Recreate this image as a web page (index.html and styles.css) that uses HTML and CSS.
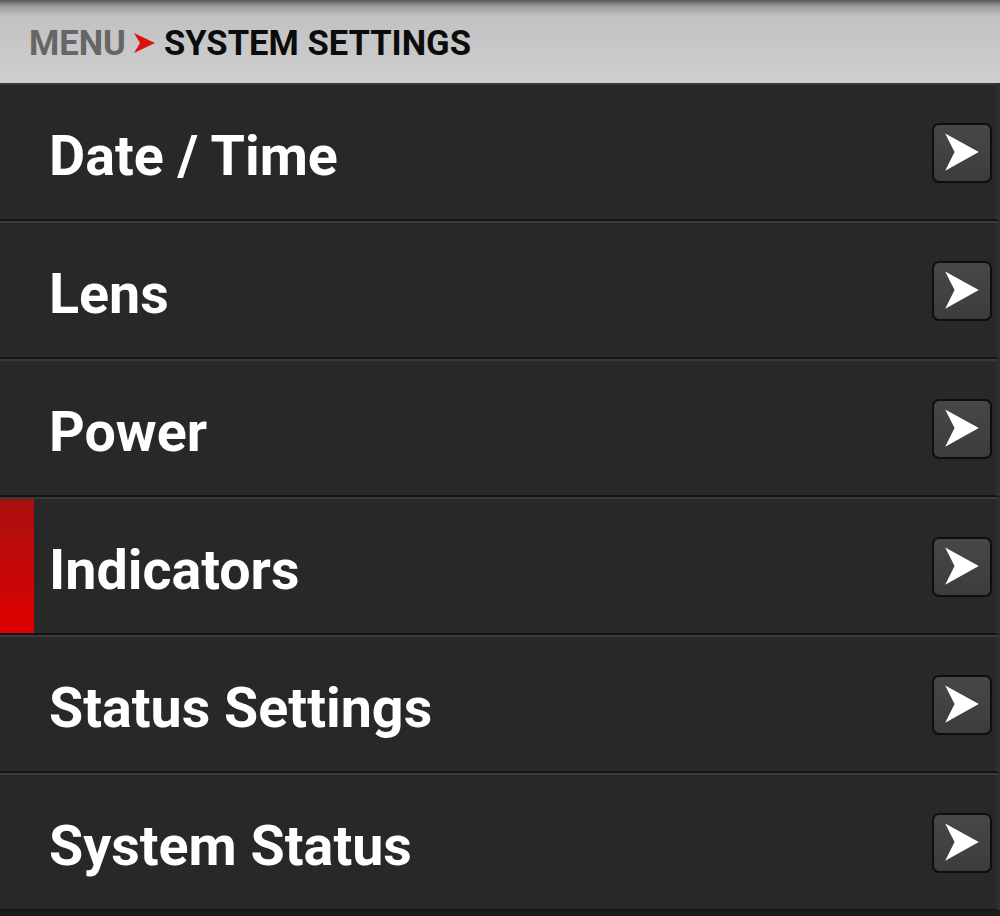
FILE: index.html
```html
<!DOCTYPE html>
<html>
<head>
<meta charset="utf-8">
<link rel="stylesheet" href="styles.css">
</head>
<body>
<div class="screen">
  <header class="header">
    <span class="crumb-menu">MENU</span>
    <svg class="crumb-arrow" width="24" height="24" viewBox="0 0 24 24"><path d="M2 2 L23 12 L2 22 L8 12 Z" fill="#e01010"/></svg>
    <span class="crumb-title">SYSTEM SETTINGS</span>
  </header>
  <ul class="list">
    <li class="row"><span class="label">Date / Time</span><span class="btn"><svg viewBox="0 0 60 60" width="56" height="56"><path d="M12 9 L48 29 L12 49 L22 29 Z" fill="#fff"/></svg></span></li>
    <li class="row"><span class="label">Lens</span><span class="btn"><svg viewBox="0 0 60 60" width="56" height="56"><path d="M12 9 L48 29 L12 49 L22 29 Z" fill="#fff"/></svg></span></li>
    <li class="row"><span class="label">Power</span><span class="btn"><svg viewBox="0 0 60 60" width="56" height="56"><path d="M12 9 L48 29 L12 49 L22 29 Z" fill="#fff"/></svg></span></li>
    <li class="row active"><span class="label">Indicators</span><span class="btn"><svg viewBox="0 0 60 60" width="56" height="56"><path d="M12 9 L48 29 L12 49 L22 29 Z" fill="#fff"/></svg></span></li>
    <li class="row"><span class="label">Status Settings</span><span class="btn"><svg viewBox="0 0 60 60" width="56" height="56"><path d="M12 9 L48 29 L12 49 L22 29 Z" fill="#fff"/></svg></span></li>
    <li class="row"><span class="label">System Status</span><span class="btn"><svg viewBox="0 0 60 60" width="56" height="56"><path d="M12 9 L48 29 L12 49 L22 29 Z" fill="#fff"/></svg></span></li>
  </ul>
</div>
</body>
</html>
```

FILE: styles.css
```css
* { box-sizing: border-box; }
html, body { margin: 0; padding: 0; background: #1c1c1c; }
body { font-family: Roboto, "Liberation Sans", sans-serif; }
.screen { width: 1000px; height: 916px; overflow: hidden; background: #1c1c1c; }
.header {
  height: 83px;
  display: flex;
  align-items: center;
  padding: 2px 0 0 29px;
  background: linear-gradient(to bottom, #5a5a5a 0px, #9a9a9a 6px, #c2c2c2 16px, #c8c8c8 50px, #cfcfcf 80px, #cfcfcf 83px);
  font-weight: 700;
  font-size: 34.6px;
}
.crumb-menu { color: #666; }
.crumb-arrow { margin: 0 8px 0 6px; }
.crumb-title { color: #0c0c0c; }
.list { list-style: none; margin: 0; padding: 0; }
.row {
  position: relative;
  height: 138px;
  display: flex;
  align-items: center;
  justify-content: space-between;
  padding: 0 4px 0 49px;
  background: #282828;
  border-top: 2px solid #393939;
  border-bottom: 2px solid #141414;
  border-right: 4px solid #2f2f2f;
}
.row.active::before {
  content: "";
  position: absolute;
  left: 0; top: 0; bottom: 0;
  width: 34px;
  background: linear-gradient(to bottom, #a81010, #e00000);
}
.label {
  color: #fff;
  font-weight: 700;
  font-size: 55.6px;
  margin-top: 8px;
}
.btn {
  width: 60px; height: 60px;
  border: 2px solid #0e0e0e;
  border-radius: 7px;
  background: linear-gradient(to bottom, #474747, #3c3c3c);
  display: flex; align-items: center; justify-content: center;
  margin-top: 2px;
}
```
